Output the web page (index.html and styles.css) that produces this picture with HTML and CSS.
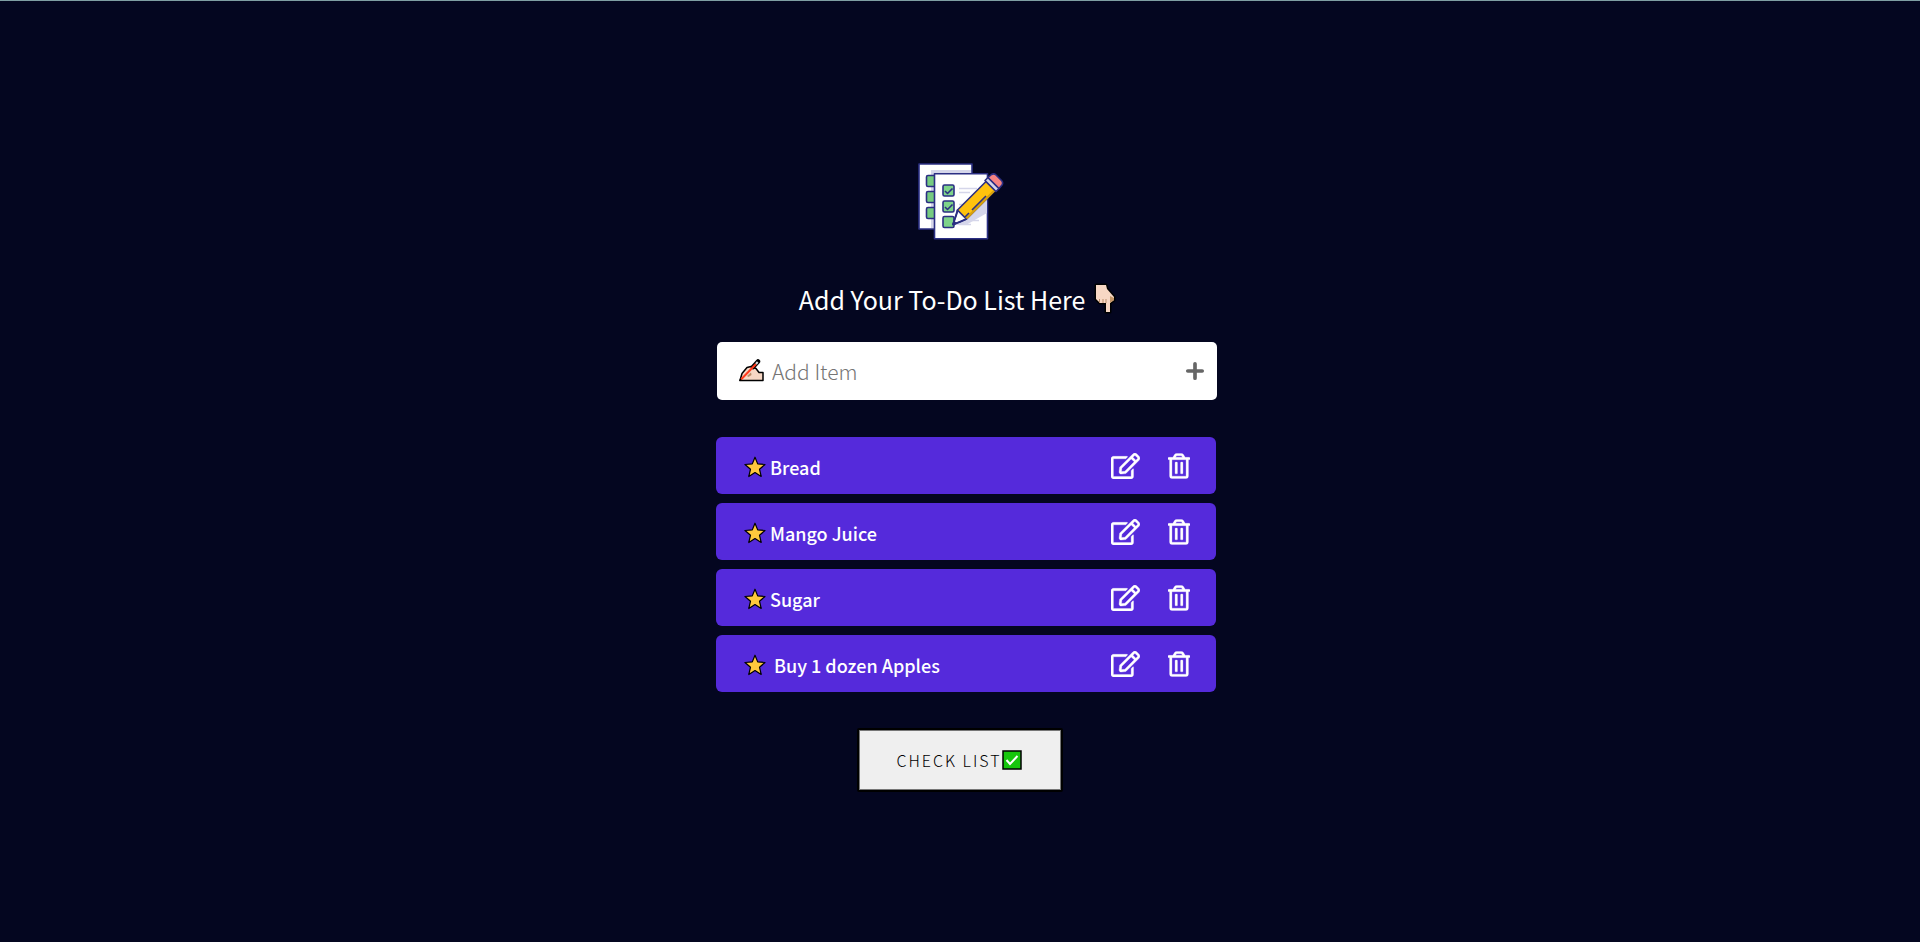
FILE: index.html
```html
<!DOCTYPE html>
<html lang="en">
<head>
<meta charset="utf-8">
<title>To-Do List</title>
<link rel="stylesheet" href="styles.css">
</head>
<body>
<svg class="defs" aria-hidden="true">
  <symbol id="edit" viewBox="0 0 576 512"><path d="M402.3 344.9l32-32c5-5 13.7-1.5 13.7 5.7V464c0 26.5-21.5 48-48 48H48c-26.5 0-48-21.5-48-48V112c0-26.5 21.5-48 48-48h273.5c7.1 0 10.7 8.6 5.7 13.7l-32 32c-1.5 1.5-3.5 2.3-5.7 2.3H48v352h352V350.5c0-2.1.8-4.1 2.3-5.6zm156.6-201.8L296.3 405.7l-90.4 10c-26.2 2.9-48.5-19.2-45.6-45.6l10-90.4L432.9 17.1c22.9-22.9 59.9-22.9 82.7 0l43.2 43.2c22.9 22.9 22.9 60 .1 82.8zM460.1 174L402 115.9 216.2 301.8l-7.3 65.3 65.3-7.3L460.1 174zm64.8-79.7l-43.2-43.2c-4.1-4.1-10.8-4.1-14.8 0L436 82l58.1 58.1 30.9-30.9c4-4.2 4-10.8-.1-14.9z"/></symbol>
  <symbol id="trash" viewBox="0 0 448 512"><path d="M268 416h24a12 12 0 0 0 12-12V188a12 12 0 0 0-12-12h-24a12 12 0 0 0-12 12v216a12 12 0 0 0 12 12zM432 80h-82.41l-34-56.7A48 48 0 0 0 274.41 0H173.59a48 48 0 0 0-41.16 23.3L98.41 80H16A16 16 0 0 0 0 96v16a16 16 0 0 0 16 16h16v336a48 48 0 0 0 48 48h288a48 48 0 0 0 48-48V128h16a16 16 0 0 0 16-16V96a16 16 0 0 0-16-16zM171.84 50.91A6 6 0 0 1 177 48h94a6 6 0 0 1 5.15 2.91L293.61 80H154.39zM368 464H80V128h288zm-212-48h24a12 12 0 0 0 12-12V188a12 12 0 0 0-12-12h-24a12 12 0 0 0-12 12v216a12 12 0 0 0 12 12z"/></symbol>
  <symbol id="star" viewBox="0 0 22 22"><path d="M11 1.200l2.700 6.700 7.300.6-5.500 4.700 1.700 7.300-6.200-4-6.200 4 1.700-7.300L1 8.500l7.300-.6z" fill="#ffc83d" stroke="#000" stroke-width="1.200" stroke-linejoin="round"/></symbol>
</svg>
<main class="todo">
  <svg class="logo" viewBox="0 0 86 78" role="img" aria-label="Checklist">
    <g stroke="#2b2f83" stroke-width="1.600" stroke-linejoin="round">
      <path d="M1 1h53v65H1z" fill="#fff"/>
      <path d="M13 7h40v58H13z" fill="#d5d6ea" stroke="none"/>
      <rect x="8.500" y="12.500" width="11" height="11" rx="1.500" fill="#76cb80"/>
      <rect x="8.500" y="28.500" width="11" height="11" rx="1.500" fill="#76cb80"/>
      <rect x="8.500" y="44.500" width="11" height="11" rx="1.500" fill="#76cb80"/>
      <path d="M16.500 10.700h53v65h-53z" fill="#fff"/>
      <path d="M36 62L69 37v13L48 62z" fill="#d5d6ea" stroke="none"/>
      <path d="M41 25.500h18M41 29.500h11M41 41.500h9M41 57.500h20M41 61.500h12" stroke="#d5d6ea" fill="none"/>
      <rect x="25" y="22" width="11" height="11" rx="1.500" fill="#7ed38a"/>
      <rect x="25" y="38" width="11" height="11" rx="1.500" fill="#7ed38a"/>
      <rect x="25" y="53.500" width="11" height="11" rx="1.500" fill="#7ed38a"/>
      <path d="M27 28l2.500 2.500 5-5M27 44l2.500 2.500 5-5" fill="none"/>
      <path d="M35 61.500L39.500 47l9 9z" fill="#fff"/>
      <path d="M39.500 47L68 18.500l9 9L50 54.500 48.500 56z" fill="#ffc20e"/>
      <path d="M47 55L76 26.500l1.500 1.500L49.500 56z" fill="#d9a20c" stroke="none"/>
      <path d="M39.500 47c0 3-.5 4-2 7.500L35 61.500l7-2.500 6.500-3M54 47l14-14M47 54l4-4" fill="none"/>
      <path d="M67 17.500l3-3L81 25.500l-3 3z" fill="#d5d6ea"/>
      <path d="M70 14.500l3.500-3q2.500-1.500 4.500.5l5.500 5.500q2 2 .5 4.500l-3 3.500z" fill="#f58382"/>
      <path d="M35 61.500l1-3 2 2z" fill="#2b2f83"/>
    </g>
  </svg>
  <h1 class="title">Add Your To-Do List Here
    <svg class="hand" viewBox="0 0 24 32" aria-hidden="true"><path d="M3 2h10l1 4 7 8v3l-4 3v9h-4v-9H7l-4-4z" fill="#f7d7c4" stroke="#000" stroke-width="3" stroke-linejoin="round"/><path d="M3 2h10l1 4 7 8v3l-4 3v9h-4v-9H7l-4-4z" fill="#f7d7c4"/><path d="M6.500 16v4M10 16v4M13 16v4" stroke="#b98d6a" fill="none"/><path d="M17 13l4 2v2l-4 3z" fill="#c59667"/></svg>
  </h1>
  <form class="entry">
    <svg class="writing" viewBox="0 0 26 24" aria-hidden="true"><path d="M2 21.500l2-7 5-6 4-1 5 2 3 4h4v8z" fill="#f7d7c4" stroke="#000" stroke-width="1.500" stroke-linejoin="round"/><path d="M9 17l4-3.500.5 2.500-3 2z" fill="#b98d6a"/><path d="M15 8L20 2.500" stroke="#000" stroke-width="4.500" stroke-linecap="round"/><path d="M3 20.500L18 5" stroke="#ff3b1d" stroke-width="2"/><path d="M18 5l1.700-2" stroke="#ddd" stroke-width="2"/><path d="M1 22.200l1-3 2 2z"/></svg>
    <input class="field" type="text" placeholder="Add Item" aria-label="Add Item">
    <button class="add" type="button" aria-label="Add"><svg class="plus" viewBox="0 0 18 18"><path d="M9 2.500v13M2.500 9h13" stroke="#666" stroke-width="3.300" stroke-linecap="round"/></svg></button>
  </form>
  <ul class="items">
    <li class="item"><svg class="star"><use href="#star"/></svg><span class="name">Bread</span><button class="act" aria-label="Edit"><svg class="edit"><use href="#edit"/></svg></button><button class="act" aria-label="Delete"><svg class="trash"><use href="#trash"/></svg></button></li>
    <li class="item"><svg class="star"><use href="#star"/></svg><span class="name">Mango Juice</span><button class="act" aria-label="Edit"><svg class="edit"><use href="#edit"/></svg></button><button class="act" aria-label="Delete"><svg class="trash"><use href="#trash"/></svg></button></li>
    <li class="item"><svg class="star"><use href="#star"/></svg><span class="name">Sugar</span><button class="act" aria-label="Edit"><svg class="edit"><use href="#edit"/></svg></button><button class="act" aria-label="Delete"><svg class="trash"><use href="#trash"/></svg></button></li>
    <li class="item"><svg class="star"><use href="#star"/></svg><span class="name">&nbsp;Buy 1 dozen Apples</span><button class="act" aria-label="Edit"><svg class="edit"><use href="#edit"/></svg></button><button class="act" aria-label="Delete"><svg class="trash"><use href="#trash"/></svg></button></li>
  </ul>
  <button class="check" type="button">Check List<svg class="tick" viewBox="0 0 20 20" aria-hidden="true"><path d="M1 1h18v18H1z" fill="#16c60c" stroke="#000" stroke-width="1.500"/><path d="M4.500 10l3.500 4 7.500-8" fill="none" stroke="#fff" stroke-width="2"/></svg></button>
</main>
</body>
</html>
```
FILE: styles.css
```css
* { box-sizing: border-box; }
body {
  margin: 0;
  min-height: 100vh;
  border-top: 1px solid #7f9ea3;
  background: #040620;
  color: #fff;
  font-family: "Noto Sans CJK JP", "Noto Sans", sans-serif;
}
button, input { font: inherit; }
.defs { display: none; }
.todo {
  display: flex;
  flex-direction: column;
  align-items: center;
  padding: 162px 16px 0;
}
.logo { width: 86px; height: 78px; margin-left: 2px; }
.title {
  display: flex;
  align-items: center;
  gap: 8px;
  margin: 40px 4px 0 0;
  font-size: 25px;
  font-weight: 400;
  line-height: 36px;
}
.hand { width: 24px; height: 32px; }
.entry {
  display: flex;
  align-items: center;
  width: 100%;
  max-width: 500px;
  height: 58px;
  margin: 25px 0 0 14px;
  padding: 0 12px 0 21px;
  border-radius: 5px;
  background: #fff;
}
.writing { width: 26px; height: 24px; }
.field {
  flex: 1;
  min-width: 0;
  padding: 0 8px;
  border: 0;
  outline: 0;
  background: none;
  font-size: 21px;
  font-weight: 200;
}
.field::placeholder { color: #757575; opacity: 1; }
.add, .act { padding: 0; border: 0; background: none; }
.add { display: flex; }
.plus { width: 20px; height: 20px; }
.items {
  display: flex;
  flex-direction: column;
  gap: 9px;
  width: 100%;
  max-width: 500px;
  margin: 37px 0 0 12px;
  padding: 0;
  list-style: none;
}
.item {
  display: flex;
  align-items: center;
  height: 57px;
  padding: 0 26px 0 28px;
  border-radius: 6px;
  background: #552adb;
}
.star { width: 22px; height: 22px; margin-top: 3px; }
.name { flex: 1; padding: 2px 0 0 4px; font-size: 18px; font-weight: 500; line-height: 24px; }
.act { display: flex; margin-left: 28px; color: #fff; }
.edit, .trash { height: 26px; fill: #fff; stroke: #fff; stroke-width: 6px; }
.edit { width: 29px; }
.trash { width: 22px; }
.check {
  display: flex;
  align-items: center;
  height: 64px;
  margin-top: 36px;
  padding: 0 39px 0 37px;
  border: 2px solid #000;
  border-radius: 2px;
  background: #efefef;
  color: #000;
  font-size: 16px;
  font-weight: 200;
  letter-spacing: 2px;
  text-transform: uppercase;
  box-shadow: inset 0 0 0 1px #767676;
}
.tick { width: 20px; height: 20px; }
```
